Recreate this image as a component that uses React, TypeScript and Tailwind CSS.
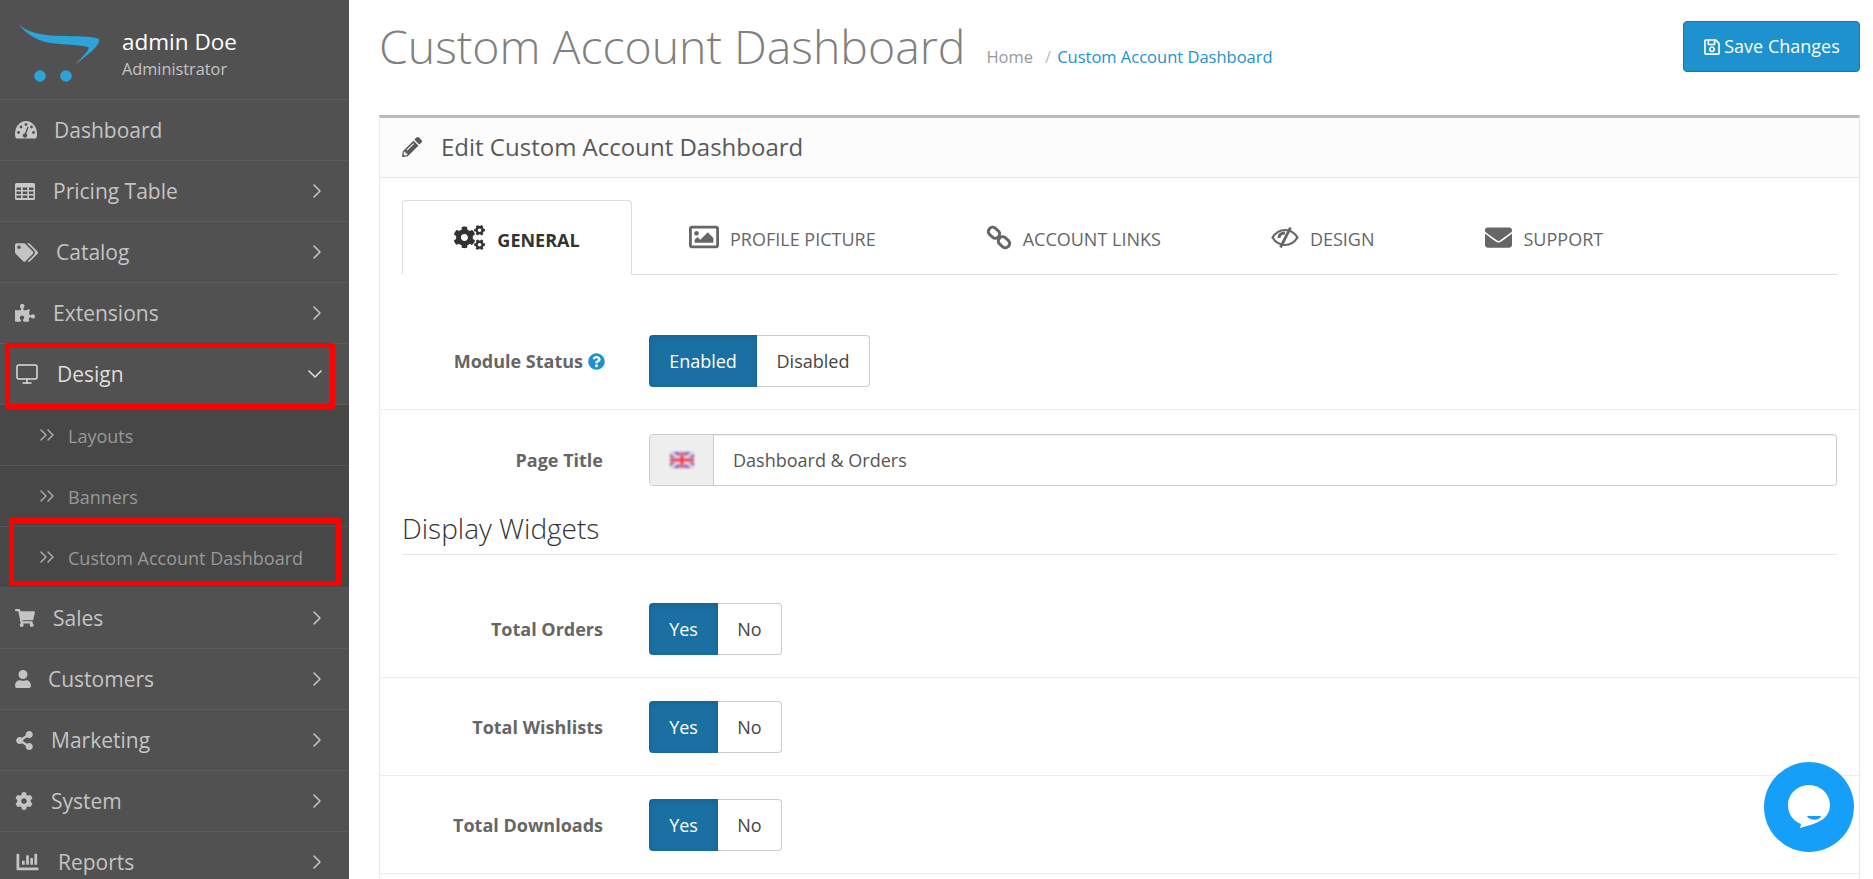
import React from "react";
import {
  FaTags,
  FaPuzzlePiece,
  FaShoppingCart,
  FaUser,
  FaShareAlt,
  FaCog,
  FaChartBar,
  FaPencilAlt,
  FaCogs,
  FaRegImage,
  FaEnvelope,
  FaRegSave,
  FaQuestionCircle,
} from "react-icons/fa";
import { ChevronDown, ChevronRight, ChevronsRight, Monitor } from "lucide-react";

function GaugeIcon() {
  return (
    <svg width="22" height="18" viewBox="0 0 22 18">
      <path d="M0 13 C0 5.500 5 0 11 0 C17 0 22 5.500 22 13 C22 15 21.500 16.500 21 17.500 H1 C0.500 16.500 0 15 0 13 Z" fill="#c8c8c8" />
      <g fill="#515151">
        <circle cx="3.500" cy="11.500" r="1.400" />
        <circle cx="6" cy="6" r="1.400" />
        <circle cx="11" cy="3.500" r="1.400" />
        <circle cx="16.500" cy="6" r="1.400" />
        <circle cx="18.500" cy="11.500" r="1.400" />
      </g>
      <path d="M13 6 L10.500 13" stroke="#515151" strokeWidth="1.400" />
      <circle cx="10" cy="14.500" r="2.200" fill="#515151" />
    </svg>
  );
}

function TableIcon() {
  return (
    <svg width="20" height="17" viewBox="0 0 20 17">
      <rect width="20" height="17" rx="1.500" fill="#c8c8c8" />
      <g fill="#515151">
        <rect x="1.500" y="4.500" width="4.500" height="2.500" />
        <rect x="7.700" y="4.500" width="4.600" height="2.500" />
        <rect x="14" y="4.500" width="4.500" height="2.500" />
        <rect x="1.500" y="8.500" width="4.500" height="2.500" />
        <rect x="7.700" y="8.500" width="4.600" height="2.500" />
        <rect x="14" y="8.500" width="4.500" height="2.500" />
        <rect x="1.500" y="12.500" width="4.500" height="2.500" />
        <rect x="7.700" y="12.500" width="4.600" height="2.500" />
        <rect x="14" y="12.500" width="4.500" height="2.500" />
      </g>
    </svg>
  );
}

function ChainIcon() {
  return (
    <svg width="26" height="25" viewBox="0 0 26 25" fill="none" stroke="#666666" strokeWidth="3">
      <rect x="2" y="3.500" width="12" height="8.500" rx="4" transform="rotate(40 8 7.750)" />
      <rect x="12" y="13" width="12" height="8.500" rx="4" transform="rotate(40 18 17.250)" />
    </svg>
  );
}

function EyeSlashIcon() {
  return (
    <svg width="28" height="21" viewBox="0 0 28 21" fill="none" stroke="#666666">
      <path d="M1.500 10.500 C5 5 9.500 3 14 3 C18.500 3 23 5 26.500 10.500 C23 16 18.500 18 14 18 C9.500 18 5 16 1.500 10.500 Z" strokeWidth="2.200" />
      <path d="M8 11 C8 7.500 10.500 6 14 6" strokeWidth="3" />
      <path d="M9.500 20.500 L19.500 0.500" strokeWidth="2.800" />
    </svg>
  );
}

const menuTop = [
  { label: "Dashboard", icon: <GaugeIcon />, gap: "ml-[17px]", arrow: false },
  { label: "Pricing Table", icon: <TableIcon />, gap: "ml-[18px]", arrow: true },
  { label: "Catalog", icon: <FaTags className="w-[23px] h-[23px]" />, gap: "ml-[18px]", arrow: true },
  { label: "Extensions", icon: <FaPuzzlePiece className="w-[20px] h-[20px]" />, gap: "ml-[18px]", arrow: true },
];

const menuBottom = [
  { label: "Sales", icon: <FaShoppingCart className="w-[20px] h-[20px]" />, gap: "ml-[18px]" },
  { label: "Customers", icon: <FaUser className="w-[16px] h-[18px]" />, gap: "ml-[17px]" },
  { label: "Marketing", icon: <FaShareAlt className="w-[19px] h-[19px]" />, gap: "ml-[17px]" },
  { label: "System", icon: <FaCog className="w-[18px] h-[18px]" />, gap: "ml-[18px]" },
  { label: "Reports", icon: <FaChartBar className="w-[25px] h-[22px]" />, gap: "ml-[18px]" },
];

function MenuRow({ label, icon, gap, arrow = true }: { label: string; icon: React.ReactNode; gap: string; arrow?: boolean }) {
  return (
    <div className="h-[61px] shrink-0 flex items-center pl-[15px] pr-[20px] border-b border-[#5c5c5c] text-[#c4c4c4] text-[21px]">
      <span className="flex items-center justify-center">{icon}</span>
      <span className={`${gap} mt-[2px]`}>{label}</span>
      {arrow && <ChevronRight className="ml-auto w-[24px] h-[24px]" strokeWidth={1.6} />}
    </div>
  );
}

function SubRow({ label }: { label: string }) {
  return (
    <div className="h-[61px] shrink-0 flex items-center pl-[35px] bg-[#474747] border-b border-[#555555] text-[#999999] text-[18px]">
      <ChevronsRight className="w-[24px] h-[24px] text-[#aaaaaa]" strokeWidth={1.5} />
      <span className="ml-[9px] mt-[2px]">{label}</span>
    </div>
  );
}

function Logo() {
  return (
    <svg width="84" height="60" viewBox="0 0 84 60" className="shrink-0 mt-[6px]">
      <path
        d="M0 0 C 8 10, 26 13, 49 13 C 62 13.500, 76 13.500, 81 16 C 82 20, 78 24, 74 28 L 57 42 C 63 35, 73 26, 70 24 C 58 21, 42 22, 30 19.500 C 16 17, 5 8, 0 0 Z"
        fill="#2ba5d8"
      />
      <circle cx="22" cy="53" r="5.800" fill="#2ba5d8" />
      <circle cx="48" cy="53" r="5.800" fill="#2ba5d8" />
    </svg>
  );
}

function UkFlag() {
  return (
    <svg width="24" height="16" viewBox="0 0 24 16" className="blur-[0.8px]">
      <rect width="24" height="16" fill="#5a62b8" />
      <path d="M0 0 L24 16 M24 0 L0 16" stroke="#f0c8d8" strokeWidth="3.500" />
      <path d="M12 0 V16 M0 8 H24" stroke="#f4d4dc" strokeWidth="5" />
      <path d="M12 0 V16 M0 8 H24" stroke="#ee2f3f" strokeWidth="2.500" />
    </svg>
  );
}

function Toggle({ on, off, onW, offW }: { on: string; off: string; onW: string; offW: string }) {
  return (
    <div className="flex h-[52px] text-[18px]">
      <div className={`${onW} pt-[2px] flex items-center justify-center bg-[#1a70a2] text-white rounded-l-[4px] shadow-[inset_0_2px_6px_rgba(0,0,0,0.125)]`}>
        {on}
      </div>
      <div className={`${offW} pt-[2px] flex items-center justify-center bg-white text-[#444444] border border-l-0 border-[#cccccc] rounded-r-[4px]`}>
        {off}
      </div>
    </div>
  );
}

function FormRow({ label, children, help = false }: { label: string; children: React.ReactNode; help?: boolean }) {
  return (
    <div className="h-[98px] shrink-0 flex items-center px-[22px] border-b border-[#ededed]">
      <div className="w-[201px] shrink-0 pt-[2px] flex items-center justify-end text-[#666666] font-bold text-[18px]">
        {label}
        {help && <FaQuestionCircle className="ml-[5px] -mr-[2px] w-[17px] h-[17px] text-[#1e91cf]" />}
      </div>
      <div className="ml-[46px] flex-1">{children}</div>
    </div>
  );
}

function Tab({ label, icon, extra = "", active = false }: { label: string; icon: React.ReactNode; extra?: string; active?: boolean }) {
  return (
    <div
      className={
        active
          ? "h-[75px] w-[230px] -mb-px flex items-center justify-center gap-[12px] bg-white border border-b-white border-[#dddddd] rounded-t-[4px] text-[#333333] font-bold text-[18px]"
          : `h-[74px] px-[55px] flex items-center gap-[11px] text-[#666666] text-[18px] ${extra}`
      }
    >
      {icon}
      <span className="mt-[5px]">{label}</span>
    </div>
  );
}

export default function App() {
  return (
    <div className="h-screen w-full overflow-hidden flex bg-white font-['Open_Sans',sans-serif]">
      <aside className="relative w-[349px] shrink-0 h-full bg-[#515151] flex flex-col">
        <div className="h-[100px] shrink-0 flex items-center pl-[18px] border-b border-[#5c5c5c]">
          <Logo />
          <div className="ml-[20px] mt-[9px]">
            <div className="text-white text-[22.5px] leading-[30px]">admin Doe</div>
            <div className="text-[#c4c4c4] text-[16.3px] leading-[24px]">Administrator</div>
          </div>
        </div>
        {menuTop.map((m) => (
          <MenuRow key={m.label} {...m} />
        ))}
        <div className="h-[61px] shrink-0 flex items-center pl-[15px] pr-[22px] text-[#dddddd] text-[21px] border-b border-[#5c5c5c]">
          <Monitor className="w-[24px] h-[24px]" strokeWidth={1.5} />
          <span className="ml-[18px] mt-[2px]">Design</span>
          <ChevronDown className="ml-auto w-[24px] h-[24px]" strokeWidth={1.6} />
        </div>
        <SubRow label="Layouts" />
        <SubRow label="Banners" />
        <SubRow label="Custom Account Dashboard" />
        {menuBottom.map((m) => (
          <MenuRow key={m.label} {...m} />
        ))}
        <div className="absolute left-[5px] top-[343px] w-[330px] h-[66px] border-[5px] border-[#ff0000] rounded-[2px]" />
        <div className="absolute left-[9px] top-[518px] w-[332px] h-[68px] border-[5px] border-[#ff0000] rounded-[2px]" />
      </aside>

      <main className="flex-1 min-w-0 pl-[30px] pr-[13px]">
        <div className="h-[115px] flex items-start">
          <h1 className="mt-[19px] text-[46.4px] leading-[54px] font-light text-[#808080]">Custom Account Dashboard</h1>
          <div className="mt-[45px] ml-[21px] flex items-center text-[16.5px] leading-[24px]">
            <span className="text-[#999999]">Home</span>
            <span className="ml-[12px] text-[#bbbbbb]">/</span>
            <span className="ml-[6px] text-[#1e91cf]">Custom Account Dashboard</span>
          </div>
          <button className="ml-auto mt-[21px] h-[51px] w-[177px] flex items-center justify-center gap-[3px] bg-[#1e91cf] border border-[#1978ab] rounded-[4px] text-white text-[18px]">
            <FaRegSave className="w-[18px] h-[18px]" />
            Save Changes
          </button>
        </div>

        <section className="min-h-[800px] border-t-[3px] border-t-[#bbbbbb] border-x border-x-[#e8e8e8]">
          <div className="h-[60px] pb-[2px] flex items-center pl-[22px] bg-[#fcfcfc] border-b border-[#e8e8e8] text-[#595959] text-[24px]">
            <FaPencilAlt className="w-[20px] h-[20px]" />
            <span className="ml-[19px]">Edit Custom Account Dashboard</span>
          </div>
          <div className="mx-[22px] mt-[22px] flex border-b border-[#dddddd]">
            <Tab label="GENERAL" active icon={<FaCogs className="w-[31px] h-[31px]" />} />
            <Tab label="PROFILE PICTURE" extra="ml-[2px]" icon={<FaRegImage className="w-[30px] h-[30px]" />} />
            <Tab label="ACCOUNT LINKS" icon={<ChainIcon />} />
            <Tab label="DESIGN" icon={<EyeSlashIcon />} />
            <Tab label="SUPPORT" extra="ml-[1px]" icon={<FaEnvelope className="w-[27px] h-[27px]" />} />
          </div>
          <div className="mt-[37px]">
            <FormRow label="Module Status" help>
              <Toggle on="Enabled" off="Disabled" onW="w-[108px]" offW="w-[113px]" />
            </FormRow>
            <div className="h-[98px] flex items-start pt-[24px] px-[22px]">
              <div className="w-[201px] shrink-0 h-[52px] flex items-center justify-end text-[#666666] font-bold text-[18px]">Page Title</div>
              <div className="ml-[46px] flex-1 h-[52px] flex border border-[#cccccc] rounded-[4px] shadow-[inset_0_1px_1px_rgba(0,0,0,0.075)]">
                <div className="w-[64px] flex items-center justify-center bg-[#eeeeee] border-r border-[#cccccc] rounded-l-[4px]">
                  <UkFlag />
                </div>
                <div className="flex-1 flex items-center pl-[19px] text-[#555555] text-[18px]">Dashboard &amp; Orders</div>
              </div>
            </div>
            <div className="mx-[22px] h-[47px] pb-[7px] flex items-center border-b border-[#e5e5e5] text-[#333333] text-[28px] font-light">
              Display Widgets
            </div>
            <div className="h-[25px]" />
            <FormRow label="Total Orders">
              <Toggle on="Yes" off="No" onW="w-[69px]" offW="w-[64px]" />
            </FormRow>
            <FormRow label="Total Wishlists">
              <Toggle on="Yes" off="No" onW="w-[69px]" offW="w-[64px]" />
            </FormRow>
            <FormRow label="Total Downloads">
              <Toggle on="Yes" off="No" onW="w-[69px]" offW="w-[64px]" />
            </FormRow>
          </div>
        </section>
      </main>

      <div className="absolute left-[1764px] top-[762px] w-[90px] h-[90px] rounded-full bg-[#169ff8] flex items-center justify-center">
        <svg width="44" height="48" viewBox="0 0 44 48">
          <path d="M22 2 C33.500 2 43 11 43 22 C43 30 38 36 31 39 C25 42 18 43 13 45 L14 41 C6 38 1 31 1 22 C1 11 10.500 2 22 2 Z" fill="#ffffff" />
          <path d="M20 33 H34 C33 38 22 38 20 33 Z" fill="#169ff8" />
        </svg>
      </div>
    </div>
  );
}
